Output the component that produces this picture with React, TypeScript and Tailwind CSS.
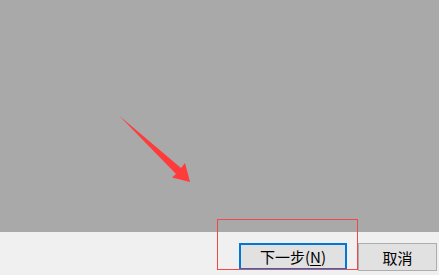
import React from "react";

const Arrow = () => (
  <svg
    className="absolute left-0 top-0 pointer-events-none"
    width={439}
    height={232}
    viewBox="0 0 439 232"
  >
    <polygon
      points="119.5,116 181,168 185,163 190,182 172,177.5 176,174"
      fill="#ff3b3b"
    />
  </svg>
);

const App = () => {
  return (
    <div
      className="relative w-[439px] h-[275px] overflow-hidden flex flex-col"
      style={{ fontFamily: '"Noto Sans CJK SC", "Noto Sans", sans-serif' }}
    >
      {/* dimmed content area */}
      <div className="relative h-[232px] bg-[#a9a9a9]">
        <Arrow />
      </div>

      {/* wizard button bar */}
      <div className="flex-1 bg-[#f0f0f0] flex justify-end items-start pt-[11px] pr-[2px] gap-[11px]">
        <button className="w-[108px] h-[27px] bg-[#e1e1e1] border-2 border-[#0078d7] text-[15px] leading-none text-black flex items-center justify-center">
          下一步(<span className="underline underline-offset-2">N</span>)
        </button>
        <button className="w-[79px] h-[28px] bg-[#e1e1e1] border border-[#adadad] text-[15px] leading-none text-black flex items-center justify-center">
          取消
        </button>
      </div>

      {/* annotation box */}
      <div className="absolute left-[217px] top-[219px] w-[141px] h-[51px] border border-[#f04848] pointer-events-none" />
    </div>
  );
};

export default App;
